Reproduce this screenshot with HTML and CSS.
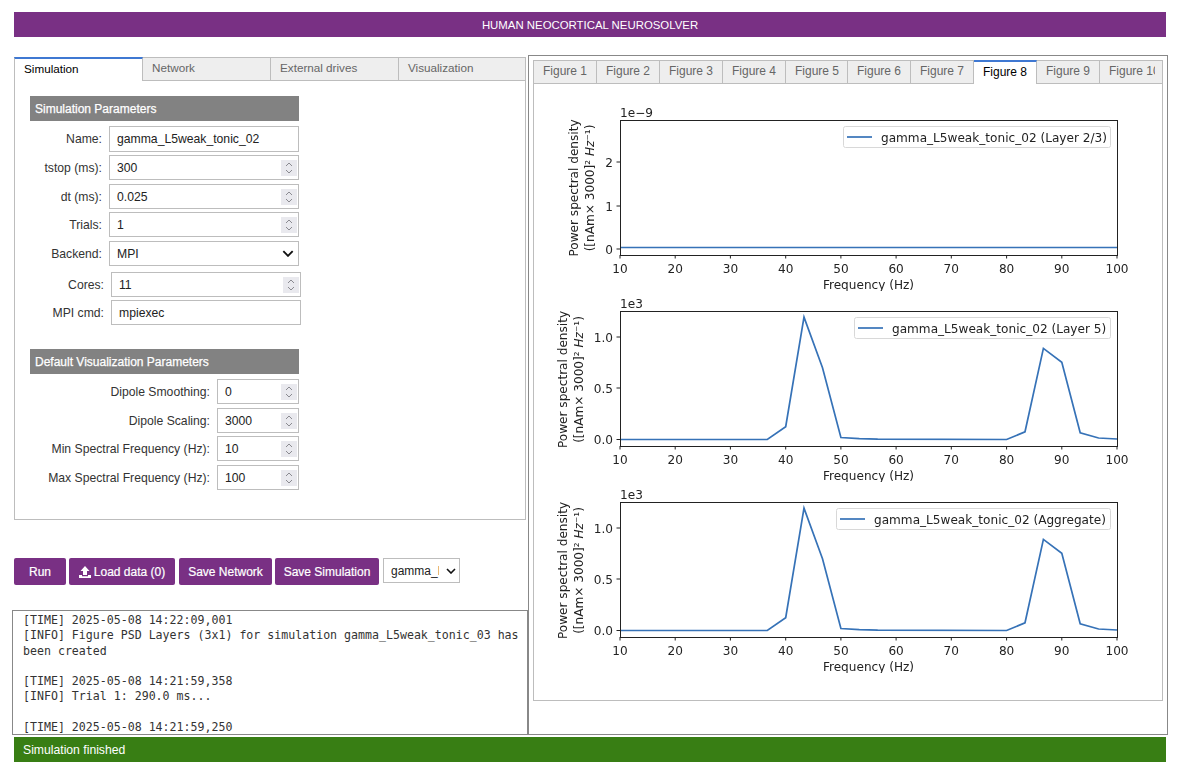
FILE: index.html
```html
<!DOCTYPE html>
<html lang="en">
<head>
<meta charset="utf-8">
<title>Human Neocortical Neurosolver</title>
<link rel="stylesheet" href="styles.css">
</head>
<body>
<div class="app">
  <header class="title">HUMAN NEOCORTICAL NEUROSOLVER</header>
  <main class="main">
    <section class="left">
      <div class="tabbed">
        <nav class="tabs">
          <div class="tab active">Simulation</div>
          <div class="tab">Network</div>
          <div class="tab">External drives</div>
          <div class="tab last">Visualization</div>
        </nav>
        <div class="tabpanel">
          <h2 class="section">Simulation Parameters</h2>
          <div class="row first tall"><label class="lab">Name:</label><div class="field"><span class="val">gamma_L5weak_tonic_02</span></div></div>
          <div class="row tight"><label class="lab">tstop (ms):</label><div class="field"><span class="val">300</span><svg class="spin" viewBox="0 0 16 16"><path d="M5 6l3-3 3 3M5 10l3 3 3-3"/></svg></div></div>
          <div class="row"><label class="lab">dt (ms):</label><div class="field"><span class="val">0.025</span><svg class="spin" viewBox="0 0 16 16"><path d="M5 6l3-3 3 3M5 10l3 3 3-3"/></svg></div></div>
          <div class="row tight"><label class="lab">Trials:</label><div class="field"><span class="val">1</span><svg class="spin" viewBox="0 0 16 16"><path d="M5 6l3-3 3 3M5 10l3 3 3-3"/></svg></div></div>
          <div class="row"><label class="lab">Backend:</label><div class="field"><span class="val">MPI</span><svg class="chev" viewBox="0 0 10 6"><path d="M1 1l4 4 4-4"/></svg></div></div>
          <div class="row shifted"><label class="lab">Cores:</label><div class="field"><span class="val">11</span><svg class="spin" viewBox="0 0 16 16"><path d="M5 6l3-3 3 3M5 10l3 3 3-3"/></svg></div></div>
          <div class="row shifted tight"><label class="lab">MPI cmd:</label><div class="field"><span class="val">mpiexec</span></div></div>

          <h2 class="section second">Default Visualization Parameters</h2>
          <div class="row viz first"><label class="lab">Dipole Smoothing:</label><div class="field"><span class="val">0</span><svg class="spin" viewBox="0 0 16 16"><path d="M5 6l3-3 3 3M5 10l3 3 3-3"/></svg></div></div>
          <div class="row viz"><label class="lab">Dipole Scaling:</label><div class="field"><span class="val">3000</span><svg class="spin" viewBox="0 0 16 16"><path d="M5 6l3-3 3 3M5 10l3 3 3-3"/></svg></div></div>
          <div class="row viz tight"><label class="lab">Min Spectral Frequency (Hz):</label><div class="field"><span class="val">10</span><svg class="spin" viewBox="0 0 16 16"><path d="M5 6l3-3 3 3M5 10l3 3 3-3"/></svg></div></div>
          <div class="row viz"><label class="lab">Max Spectral Frequency (Hz):</label><div class="field"><span class="val">100</span><svg class="spin" viewBox="0 0 16 16"><path d="M5 6l3-3 3 3M5 10l3 3 3-3"/></svg></div></div>
        </div>
      </div>

      <div class="actions">
        <button class="btn run">Run</button>
        <button class="btn load"><svg class="upload" viewBox="0 0 12 12"><path d="M6 0l4.5 5H8v4H4V5H1.5zM0 9h3v1.3h6V9h3v3H0z"/></svg>Load data (0)</button>
        <button class="btn net">Save Network</button>
        <button class="btn sim">Save Simulation</button>
        <div class="picker"><span class="pickval">gamma_L5weak_tonic_02</span><svg class="chev" viewBox="0 0 10 6"><path d="M1 1l4 4 4-4"/></svg></div>
      </div>

      <pre class="log">[TIME] 2025-05-08 14:22:09,001
[INFO] Figure PSD Layers (3x1) for simulation gamma_L5weak_tonic_03 has been created

[TIME] 2025-05-08 14:21:59,358
[INFO] Trial 1: 290.0 ms...

[TIME] 2025-05-08 14:21:59,250</pre>
    </section>

    <section class="right">
      <nav class="figtabs">
        <div class="figtab"><span>Figure 1</span></div>
        <div class="figtab"><span>Figure 2</span></div>
        <div class="figtab"><span>Figure 3</span></div>
        <div class="figtab"><span>Figure 4</span></div>
        <div class="figtab"><span>Figure 5</span></div>
        <div class="figtab"><span>Figure 6</span></div>
        <div class="figtab"><span>Figure 7</span></div>
        <div class="figtab active"><span>Figure 8</span></div>
        <div class="figtab"><span>Figure 9</span></div>
        <div class="figtab"><span>Figure 10</span></div>
      </nav>
      <div class="figpanel">

        <svg class="plot" viewBox="0 0 628 191">
          <text class="t" x="86" y="17">1e−9</text>
          <path class="tick" d="M86 155v3.5M141.2 155v3.5M196.4 155v3.5M251.7 155v3.5M306.9 155v3.5M362.1 155v3.5M417.3 155v3.5M472.6 155v3.5M527.8 155v3.5M583 155v3.5M82.5 62H86M82.5 106H86M82.5 149H86"/>
          <text class="t e" x="79" y="66.5">2</text>
          <text class="t e" x="79" y="110.5">1</text>
          <text class="t e" x="79" y="153.5">0</text>
          <polyline class="series" points="86,147.5 583,147.5"/>
          <rect class="axes" x="86.5" y="20.5" width="497" height="135"/>
          <g class="xlabels">
            <text class="t m" x="86" y="172.5">10</text><text class="t m" x="141.2" y="172.5">20</text><text class="t m" x="196.4" y="172.5">30</text><text class="t m" x="251.7" y="172.5">40</text><text class="t m" x="306.9" y="172.5">50</text><text class="t m" x="362.1" y="172.5">60</text><text class="t m" x="417.3" y="172.5">70</text><text class="t m" x="472.6" y="172.5">80</text><text class="t m" x="527.8" y="172.5">90</text><text class="t m" x="583" y="172.5">100</text>
          </g>
          <text class="t m" x="334.5" y="188.5">Frequency (Hz)</text>
          <g transform="translate(44,88) rotate(-90)">
            <text class="t m" x="0" y="0">Power spectral density</text>
            <text class="t m" x="0" y="16">([nAm× 3000]² <tspan class="it">Hz</tspan>⁻¹)</text>
          </g>
          <rect class="legend" x="309.5" y="26.5" width="267" height="21" rx="2"/>
          <path class="series" d="M313 37h25"/>
          <text class="t" x="347" y="41.5">gamma_L5weak_tonic_02 (Layer 2/3)</text>
        </svg>

        <svg class="plot" viewBox="0 0 628 191">
          <text class="t" x="86" y="17">1e3</text>
          <path class="tick" d="M86 155v3.5M141.2 155v3.5M196.4 155v3.5M251.7 155v3.5M306.9 155v3.5M362.1 155v3.5M417.3 155v3.5M472.6 155v3.5M527.8 155v3.5M583 155v3.5M82.5 46H86M82.5 97H86M82.5 148.5H86"/>
          <text class="t e" x="79" y="50.5">1.0</text>
          <text class="t e" x="79" y="101.5">0.5</text>
          <text class="t e" x="79" y="153">0.0</text>
          <polyline class="series" points="86,148.5 233.3,148.5 251.7,135.7 270,26.1 288.5,76.8 306.9,146.5 325.3,147.7 343.7,148.2 472.6,148.5 491,140.8 509.4,57.4 527.8,71.2 546.2,141.8 564.6,147 583,148"/>
          <rect class="axes" x="86.5" y="20.5" width="497" height="135"/>
          <g class="xlabels">
            <text class="t m" x="86" y="172.5">10</text><text class="t m" x="141.2" y="172.5">20</text><text class="t m" x="196.4" y="172.5">30</text><text class="t m" x="251.7" y="172.5">40</text><text class="t m" x="306.9" y="172.5">50</text><text class="t m" x="362.1" y="172.5">60</text><text class="t m" x="417.3" y="172.5">70</text><text class="t m" x="472.6" y="172.5">80</text><text class="t m" x="527.8" y="172.5">90</text><text class="t m" x="583" y="172.5">100</text>
          </g>
          <text class="t m" x="334.5" y="188.5">Frequency (Hz)</text>
          <g transform="translate(32.5,88.5) rotate(-90)">
            <text class="t m" x="0" y="0">Power spectral density</text>
            <text class="t m" x="0" y="16">([nAm× 3000]² <tspan class="it">Hz</tspan>⁻¹)</text>
          </g>
          <rect class="legend" x="320.5" y="26.5" width="256" height="21" rx="2"/>
          <path class="series" d="M324 37h25"/>
          <text class="t" x="358" y="41.5">gamma_L5weak_tonic_02 (Layer 5)</text>
        </svg>

        <svg class="plot" viewBox="0 0 628 191">
          <text class="t" x="86" y="17">1e3</text>
          <path class="tick" d="M86 155v3.5M141.2 155v3.5M196.4 155v3.5M251.7 155v3.5M306.9 155v3.5M362.1 155v3.5M417.3 155v3.5M472.6 155v3.5M527.8 155v3.5M583 155v3.5M82.5 46H86M82.5 97H86M82.5 148.5H86"/>
          <text class="t e" x="79" y="50.5">1.0</text>
          <text class="t e" x="79" y="101.5">0.5</text>
          <text class="t e" x="79" y="153">0.0</text>
          <polyline class="series" points="86,148.5 233.3,148.5 251.7,135.7 270,26.1 288.5,76.8 306.9,146.5 325.3,147.7 343.7,148.2 472.6,148.5 491,140.8 509.4,57.4 527.8,71.2 546.2,141.8 564.6,147 583,148"/>
          <rect class="axes" x="86.5" y="20.5" width="497" height="135"/>
          <g class="xlabels">
            <text class="t m" x="86" y="172.5">10</text><text class="t m" x="141.2" y="172.5">20</text><text class="t m" x="196.4" y="172.5">30</text><text class="t m" x="251.7" y="172.5">40</text><text class="t m" x="306.9" y="172.5">50</text><text class="t m" x="362.1" y="172.5">60</text><text class="t m" x="417.3" y="172.5">70</text><text class="t m" x="472.6" y="172.5">80</text><text class="t m" x="527.8" y="172.5">90</text><text class="t m" x="583" y="172.5">100</text>
          </g>
          <text class="t m" x="334.5" y="188.5">Frequency (Hz)</text>
          <g transform="translate(32.5,88.5) rotate(-90)">
            <text class="t m" x="0" y="0">Power spectral density</text>
            <text class="t m" x="0" y="16">([nAm× 3000]² <tspan class="it">Hz</tspan>⁻¹)</text>
          </g>
          <rect class="legend" x="302.5" y="26.5" width="274" height="21" rx="2"/>
          <path class="series" d="M306 37h25"/>
          <text class="t" x="340" y="41.5">gamma_L5weak_tonic_02 (Aggregate)</text>
        </svg>

      </div>
    </section>
  </main>
  <footer class="status">Simulation finished</footer>
</div>
</body>
</html>
```
FILE: styles.css
```css
* { box-sizing: border-box; }
html, body { margin: 0; padding: 0; background: #fff; }
body { font-family: "Liberation Sans", Arial, sans-serif; font-size: 12px; color: #222; }

.app { padding: 12px 15px 0 14px; width: 1183px; height: 772px; overflow: hidden; }

.title {
  height: 25px; margin-right: 2px; background: #793084; color: #fff; font-size: 11.4px;
  display: flex; align-items: center; justify-content: center;
}

.main { display: grid; grid-template-columns: 514px 640px; margin-top: 18px; height: 680px; }

.left { display: flex; flex-direction: column; min-width: 0; }
.tabbed { width: 512px; margin-top: 2px; }
.tabs { display: flex; height: 24px; font-size: 11.7px; }
.tab {
  width: 128px; height: 24px; padding: 0 9px; line-height: 20px; color: #666;
  background: #eee; border: 1px solid #bdbdbd; border-left: 0;
}
.tab.last { width: 127px; }
.tab.active {
  width: 129px; padding-left: 9px; background: #fff; color: #000; border: 1px solid #bdbdbd; border-top: 2px solid #3f78d2; border-bottom: 0; line-height: 19px;
}
.tabpanel { height: 439px; border: 1px solid #bdbdbd; border-top: 0; padding: 15px 15px 0; }

.section {
  margin: 0; width: 269px; height: 25px; padding-left: 5px; line-height: 26px;
  background: #828282; color: #fff; font-size: 12px; font-weight: 400;
  -webkit-text-stroke: 0.25px #fff;
}
.section.second { margin-top: 24px; }

.row { display: flex; align-items: center; gap: 7px; height: 25px; width: 269px; margin-top: 4px; font-size: 12.2px; }
.row.first { margin-top: 5px; }
.row.tall { height: 26px; }
.row.tight { margin-top: 3px; }
.row.shifted { width: 271px; margin-top: 6px; }
.row.shifted.tight { margin-top: 3px; }
.lab { width: 72px; flex: none; text-align: right; color: #333; }
.shifted .lab { width: 74px; }
.viz .lab { width: 180px; }
.field {
  flex: 1; height: 100%; min-width: 0; display: flex; align-items: center; justify-content: space-between;
  border: 1px solid #bdbdbd; background: #fff; padding: 0 1px 0 7px; color: #222;
}
.spin { width: 16px; height: 16px; background: #e9e9ee; flex: none; }
.spin path { fill: none; stroke: #8a8a90; stroke-width: 1; }
.chev { width: 12px; height: 7px; flex: none; margin-right: 3px; }
.chev path { fill: none; stroke: #111; stroke-width: 1.6; }

.actions { display: flex; align-items: flex-start; margin-top: 38px; height: 27px; }
.btn {
  height: 27px; border: 0; border-radius: 2px; background: #793084; color: #fff; padding: 0;
  font: inherit; -webkit-text-stroke: 0.2px #fff;
  display: flex; align-items: center; justify-content: center;
}
.run { width: 52px; }
.load { width: 106px; margin-left: 3px; gap: 3px; }
.net { width: 93px; margin-left: 4px; }
.sim { width: 104px; margin-left: 3px; }
.upload { width: 12px; height: 12px; fill: #fff; }
.picker {
  width: 77px; height: 25px; margin-left: 4px; border: 1px solid #bdbdbd; padding-left: 7px;
  display: flex; align-items: center; justify-content: space-between;
}
.pickval { width: 48px; overflow: hidden; white-space: nowrap; }
.picker .chev { width: 10px; height: 6px; margin-right: 3px; }

.log {
  margin: 25px 0 0 -2px; width: 516px; height: 125px; overflow: hidden;
  border: 1px solid #888; padding: 2px 4px 0 10px;
  font-family: "DejaVu Sans Mono", monospace; font-size: 11.6px; line-height: 15.3px; color: #333;
  white-space: pre-wrap;
}

.right { border: 1px solid #888; padding: 4px; height: 680px; min-width: 0; }
.figtabs { display: flex; height: 24px; width: 630px; overflow: hidden; }
.figtab {
  width: 63px; flex: none; padding-left: 9px; line-height: 21px; color: #666; white-space: nowrap;
  background: #eee; border: 1px solid #bdbdbd; border-left: 0;
}
.figtab span { display: block; width: 46px; overflow: hidden; }
.figtab:first-child { width: 64px; border-left: 1px solid #bdbdbd; }
.figtab:nth-child(5) { width: 62px; }
.figtab.active { background: #fff; color: #000; border-top: 2px solid #3f78d2; border-bottom: 0; line-height: 20px; }
.figpanel { height: 617px; border: 1px solid #bdbdbd; border-top: 0; padding-top: 16px; }

.plot { display: block; width: 628px; height: 191px; filter: blur(0.3px); }
.t { font-family: "DejaVu Sans", sans-serif; font-size: 12.1px; fill: #222; }
.e { text-anchor: end; }
.m { text-anchor: middle; }
.it { font-style: italic; }
.axes { fill: none; stroke: #222; stroke-width: 1; }
.tick { fill: none; stroke: #222; stroke-width: 1; }
.series { fill: none; stroke: #3672b7; stroke-width: 1.7; }
.legend { fill: #fff; fill-opacity: .85; stroke: #d8d8d8; stroke-width: 1; }

.status {
  margin-top: 2px; margin-right: 2px; height: 25px; line-height: 26px; padding-left: 9px; font-size: 12.2px;
  background: #387e14; color: #fff;
}
```
